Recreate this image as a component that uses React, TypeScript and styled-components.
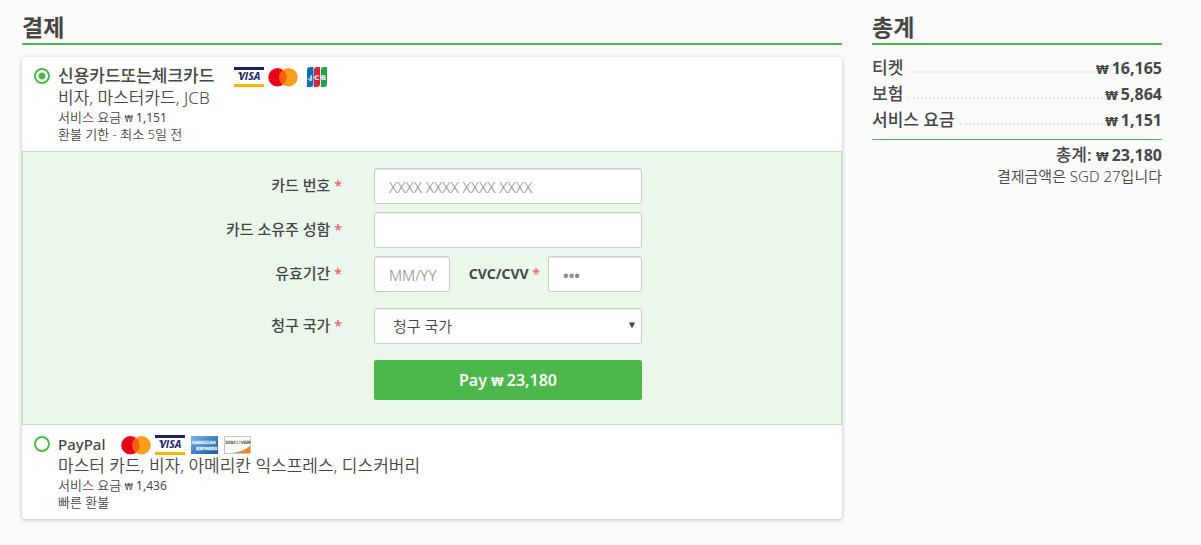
import React, { useState } from "react";
import styled, { createGlobalStyle } from "styled-components";

const GREEN = "#4cb84c";
const INK = "#464646";

const GlobalStyle = createGlobalStyle`
  *, *::before, *::after { box-sizing: border-box; }
  body {
    margin: 0;
    background: #fbfbfb;
    color: ${INK};
    font-family: "Noto Sans", "Noto Sans CJK KR", sans-serif;
    font-size: 16px;
  }
  input, select, button { font: inherit; color: inherit; }
`;

const Page = styled.div`
  display: grid;
  grid-template-columns: minmax(0, 82fr) minmax(0, 29fr);
  gap: 30px;
  align-items: start;
  padding: 12px 39px 24px 22px;
`;

const Heading = styled.h2`
  margin: 0;
  height: 33px;
  line-height: 30px;
  font-size: 23px;
  font-weight: 600;
  border-bottom: 2px solid ${GREEN};
`;

const Card = styled.div`
  margin-top: 12px;
  background: #fff;
  border-radius: 4px;
  box-shadow: 0 1px 4px rgba(0, 0, 0, 0.25);
`;

const Method = styled.label`
  display: flex;
  align-items: flex-start;
  gap: 8px;
  padding: 8px 12px;
  cursor: pointer;
`;

const Radio = styled.input`
  appearance: none;
  flex: none;
  width: 16px;
  height: 16px;
  margin: 3px 0 0;
  border: 2px solid ${GREEN};
  border-radius: 50%;
  background: #fff;
  &:checked {
    background: radial-gradient(circle, ${GREEN} 0 3px, #fff 4px);
  }
`;

const MethodName = styled.span`
  display: flex;
  align-items: flex-start;
  gap: 16px;
  height: 22px;
  font-size: 15px;
  line-height: 22px;
  font-weight: 500;
  &:lang(ko) {
    gap: 20px;
    font-size: 17px;
  }
`;

const Logos = styled.span`
  display: flex;
  align-items: center;
  gap: 4px;
  margin-top: 2px;
`;

const Description = styled.span`
  display: block;
  font-size: 17px;
  line-height: 22px;
  font-weight: 350;
`;

const Note = styled.span`
  display: block;
  font-size: 13px;
  line-height: 17px;
  font-weight: 350;
`;

const Price = styled.span<{ $size: number; $weight: number }>`
  font-size: ${(p) => p.$size}px;
  font-weight: ${(p) => p.$weight};
  line-height: 1;
`;

const WonSign = styled.span`
  margin-right: 3px;
  font-family: "DejaVu Sans", sans-serif;
  font-size: 0.72em;
  line-height: 1;
`;

const Panel = styled.form`
  display: flex;
  flex-direction: column;
  gap: 8px;
  padding: 16px 0 24px;
  background: #ebf7eb;
  border: 1px solid #bce3bc;
`;

const Row = styled.div<{ $spaced?: boolean }>`
  display: grid;
  grid-template-columns: minmax(0, 319fr) minmax(0, 268fr) minmax(0, 167fr);
  column-gap: 32px;
  align-items: center;
  margin-top: ${(p) => (p.$spaced ? 8 : 0)}px;
  & > :only-child { grid-column: 2; }
`;

const Label = styled.label`
  text-align: right;
  white-space: nowrap;
  font-size: 15px;
  line-height: 20px;
  font-weight: 500;
  padding-bottom: 2px;
  &:lang(en) {
    padding-bottom: 0;
    font-size: 14px;
    font-weight: 700;
  }
`;

const Required = styled.span`
  color: #f0525f;
  font-size: 14px;
  font-weight: 400;
`;

const Input = styled.input`
  width: 100%;
  min-width: 0;
  height: 36px;
  padding: 2px 0 0 14px;
  border: 1px solid #ccc;
  border-radius: 2px;
  background: #fff;
  box-shadow: inset 0 1px 1px rgba(0, 0, 0, 0.08);
  font-size: 15px;
  font-weight: 350;
  &::placeholder { color: #8c8c8c; opacity: 1; }
`;

const CodeInput = styled(Input)`
  font-weight: 700;
`;

const Pair = styled.div`
  display: grid;
  grid-template-columns: 76fr 82fr 94fr;
  column-gap: 8px;
  align-items: center;
`;

const SelectBox = styled.span`
  position: relative;
  display: block;
`;

const Select = styled.select`
  appearance: none;
  display: block;
  width: 100%;
  height: 36px;
  padding: 0 18px;
  border: 1px solid #ccc;
  border-radius: 2px;
  background: #fff;
  box-shadow: inset 0 1px 1px rgba(0, 0, 0, 0.08);
  font-size: 15px;
  font-weight: 350;
`;

const Arrow = styled.svg`
  position: absolute;
  right: 7px;
  top: 14px;
  pointer-events: none;
`;

const PayButton = styled.button`
  height: 40px;
  padding: 0;
  border: 0;
  border-radius: 2px;
  background: ${GREEN};
  color: #fff;
  font-size: 16px;
  font-weight: 600;
  cursor: pointer;
`;

const Lines = styled.dl`
  margin: 10px 0 6px;
`;

const Line = styled.div`
  display: flex;
  align-items: center;
  height: 26px;
`;

const Term = styled.dt`
  font-size: 17px;
  line-height: 24px;
  font-weight: 500;
`;

const Leader = styled.span`
  flex: 1;
  margin: 8px 2px 0 5px;
  border-bottom: 2px dotted #e6e6e6;
`;

const Amount = styled.dd`
  margin: 0;
  line-height: 24px;
`;

const Total = styled.div`
  padding-top: 4px;
  border-top: 1px solid ${GREEN};
  text-align: right;
  font-size: 17px;
  line-height: 22px;
  font-weight: 500;
`;

const Converted = styled.div`
  text-align: right;
  font-size: 15px;
  line-height: 20px;
  font-weight: 350;
`;

const Won = ({ value, size, weight }: { value: string; size: number; weight: number }) => (
  <Price $size={size} $weight={weight}>
    <WonSign>₩</WonSign>
    {value}
  </Price>
);

const Visa = () => (
  <svg width="30" height="20" viewBox="0 0 30 20" role="img" aria-label="Visa">
    <rect width="30" height="20" fill="#fff" />
    <rect width="30" height="3" fill="#1a1f71" />
    <rect y="17" width="30" height="3" fill="#f7b600" />
    <path d="M3.500 5.500h3.500l1.500 4z" fill="#1a1f71" />
    <text x="15.5" y="13.400" textAnchor="middle" fontFamily="Open Sans" fontSize="10.500" fontWeight="700" fontStyle="italic" fill="#1a1f71">VISA</text>
  </svg>
);

const Mastercard = () => (
  <svg width="30" height="20" viewBox="0 0 30 20" role="img" aria-label="Mastercard">
    <circle cx="9.5" cy="10.3" r="9.200" fill="#eb001b" />
    <circle cx="20.5" cy="10.3" r="9.200" fill="#f79e1b" />
    <path d="M15 2.900a9.200 9.200 0 0 1 0 14.800a9.200 9.200 0 0 1 0-14.800z" fill="#ff5f00" />
  </svg>
);

const Jcb = () => (
  <svg width="30" height="20" viewBox="0 0 30 20" role="img" aria-label="JCB">
    <path d="M8.500 0H11.500V17a3 3 0 0 1-3 3H5V3a3.500 3 0 0 1 3.500-3z" fill="#0e6db4" />
    <path d="M15.500 0H18V17a3 3 0 0 1-3 3H12V3a3.500 3 0 0 1 3.500-3z" fill="#dc2339" />
    <path d="M22.500 0H25V17a3 3 0 0 1-3 3H18.800V3a3.500 3 0 0 1 3.700-3z" fill="#22a04c" />
    <g textAnchor="middle" fontFamily="DejaVu Sans" fontSize="6.500" fontWeight="700" fill="#fff" textRendering="geometricPrecision">
      <text x="9" y="12.500">J</text>
      <text x="15" y="12.500">C</text>
      <text x="21.500" y="12.500">B</text>
    </g>
    <path d="M5.500 12h3M12 10.200h2M18 10.200h2" stroke="#fff" strokeWidth="0.900" />
  </svg>
);

const Amex = () => (
  <svg width="30" height="20" viewBox="0 0 30 20" role="img" aria-label="American Express">
    <defs>
      <linearGradient id="amex" x1="0" y1="0" x2="1" y2="1">
        <stop offset="0" stopColor="#7db8e3" />
        <stop offset="0.5" stopColor="#3f83c4" />
        <stop offset="1" stopColor="#1f55a0" />
      </linearGradient>
    </defs>
    <rect x="2" y="1" width="27" height="18" fill="url(#amex)" />
    <g fontFamily="Liberation Sans" fontSize="4.500" fontWeight="700" fill="#4d8fcc" stroke="#dbeaf7" strokeWidth="0.5" textRendering="geometricPrecision">
      <text x="2.300" y="9">AMERICAN</text>
      <text x="7" y="14.500">EXPRESS</text>
    </g>
  </svg>
);

const Discover = () => (
  <svg width="30" height="20" viewBox="0 0 30 20" role="img" aria-label="Discover">
    <rect x="1.500" y="1.500" width="26" height="17" fill="#fff" stroke="#c4c4c4" />
    <path d="M9 18C17 17 23 14.500 27 11V18z" fill="#f58220" />
    <text y="8.500" fontFamily="Liberation Sans" fontSize="4.800" fontWeight="700" fill="#333" textRendering="geometricPrecision">
      <tspan x="2.500">DISC</tspan>
      <tspan fill="#f58220">O</tspan>
      <tspan>VER</tspan>
    </text>
  </svg>
);

const charges = [
  { name: "티켓", amount: "16,165" },
  { name: "보험", amount: "5,864" },
  { name: "서비스 요금", amount: "1,151" },
];

export default function App() {
  const [method, setMethod] = useState("card");

  return (
    <>
      <GlobalStyle />
      <Page>
        <main>
          <Heading>결제</Heading>
          <Card>
            <Method>
              <Radio type="radio" name="method" checked={method === "card"} onChange={() => setMethod("card")} />
              <span>
                <MethodName lang="ko">
                  신용카드또는체크카드
                  <Logos>
                    <Visa />
                    <Mastercard />
                    <Jcb />
                  </Logos>
                </MethodName>
                <Description>비자, 마스터카드, JCB</Description>
                <Note>서비스 요금 <Won value="1,151" size={12} weight={400} /></Note>
                <Note>환불 기한 - 최소 5일 전</Note>
              </span>
            </Method>

            <Panel onSubmit={(e) => e.preventDefault()}>
              <Row>
                <Label htmlFor="number">카드 번호 <Required>*</Required></Label>
                <Input id="number" placeholder="XXXX XXXX XXXX XXXX" />
              </Row>
              <Row>
                <Label htmlFor="holder">카드 소유주 성함 <Required>*</Required></Label>
                <Input id="holder" />
              </Row>
              <Row>
                <Label htmlFor="expiry">유효기간 <Required>*</Required></Label>
                <Pair>
                  <Input id="expiry" placeholder="MM/YY" />
                  <Label htmlFor="cvc" lang="en">CVC/CVV <Required>*</Required></Label>
                  <CodeInput id="cvc" placeholder="•••" />
                </Pair>
              </Row>
              <Row $spaced>
                <Label htmlFor="country">청구 국가 <Required>*</Required></Label>
                <SelectBox>
                  <Select id="country">
                    <option>청구 국가</option>
                  </Select>
                  <Arrow width="6" height="7" viewBox="0 0 6 7" aria-hidden="true">
                    <path d="M0 0.500h6L3 6.500z" fill={INK} />
                  </Arrow>
                </SelectBox>
              </Row>
              <Row $spaced>
                <PayButton type="submit">Pay <Won value="23,180" size={16} weight={600} /></PayButton>
              </Row>
            </Panel>

            <Method>
              <Radio type="radio" name="method" checked={method === "paypal"} onChange={() => setMethod("paypal")} />
              <span>
                <MethodName lang="en">
                  PayPal
                  <Logos>
                    <Mastercard />
                    <Visa />
                    <Amex />
                    <Discover />
                  </Logos>
                </MethodName>
                <Description>마스터 카드, 비자, 아메리칸 익스프레스, 디스커버리</Description>
                <Note>서비스 요금 <Won value="1,436" size={12} weight={400} /></Note>
                <Note>빠른 환불</Note>
              </span>
            </Method>
          </Card>
        </main>

        <aside>
          <Heading>총계</Heading>
          <Lines>
            {charges.map((c) => (
              <Line key={c.name}>
                <Term>{c.name}</Term>
                <Leader />
                <Amount><Won value={c.amount} size={16} weight={700} /></Amount>
              </Line>
            ))}
          </Lines>
          <Total>총계: <Won value="23,180" size={16} weight={700} /></Total>
          <Converted>결제금액은 SGD 27입니다</Converted>
        </aside>
      </Page>
    </>
  );
}
